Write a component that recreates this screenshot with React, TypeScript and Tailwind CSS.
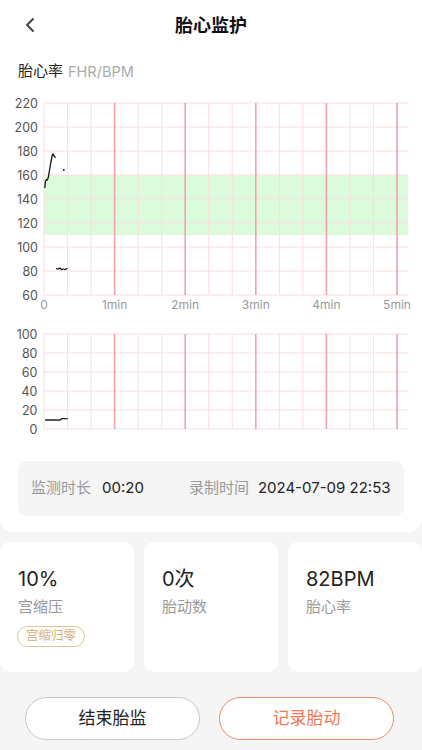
import { ChevronLeft } from 'lucide-react'

const X0 = 44
const X1 = 408
const STEP = 70.6 / 3 // one third of a minute

// vertical grid lines: minor every 20s, major every minute
const vLines = Array.from({ length: 16 }, (_, i) => ({
  x: X0 + i * STEP,
  major: i > 0 && i % 3 === 0,
}))

function Grid({ top, rows, rowH }: { top: number; rows: number; rowH: number }) {
  const bottom = top + rows * rowH
  return (
    <g>
      {Array.from({ length: rows + 1 }, (_, i) => (
        <line key={'h' + i} x1={X0} x2={X1} y1={top + i * rowH} y2={top + i * rowH} stroke="#fcdde2" strokeWidth={1} />
      ))}
      {vLines.filter(v => !v.major).map((v, i) => (
        <line key={'v' + i} x1={v.x} x2={v.x} y1={top} y2={bottom} stroke="#fcdde2" strokeWidth={1} />
      ))}
      {vLines.filter(v => v.major).map((v, i) => (
        <line key={'m' + i} x1={v.x} x2={v.x} y1={top} y2={bottom} stroke="#f4a1ad" strokeWidth={1.6} />
      ))}
    </g>
  )
}

const font = 'Inter, "Noto Sans CJK SC", sans-serif'

function HeartChart() {
  // local coords: plot top 21 (220), bottom 213 (60), 24px per 20 bpm
  const top = 21
  const y = (v: number) => top + (220 - v) * 1.2
  const labels = [220, 200, 180, 160, 140, 120, 100, 80, 60]
  return (
    <svg width={422} height={233} className="block">
      <rect x={X0} y={y(160)} width={X1 - X0} height={y(110) - y(160)} fill="#dcfadc" />
      <Grid top={top} rows={8} rowH={24} />
      {labels.map(l => (
        <text key={l} x={38} y={y(l) + 4.5} textAnchor="end" fontSize={12.5} fill="#555" fontFamily={font}>{l}</text>
      ))}
      {['0', '1min', '2min', '3min', '4min', '5min'].map((t, i) => (
        <text key={t} x={X0 + i * 70.6} y={227} textAnchor="middle" fontSize={12} fill="#999" fontFamily={font}>{t}</text>
      ))}
      <polyline
        points="44.8,106 45.4,99.5 46.5,97.5 47.3,98 48.3,95.5 49.3,89.5 51,79.5 52.3,73 53.3,72 54.3,74.5 55.7,75.5"
        fill="none" stroke="#111" strokeWidth={1.3} strokeLinejoin="round"
      />
      <circle cx={63.8} cy={88} r={0.9} fill="#111" />
      <polyline
        points="56,186.5 58,187 60,186 61.5,187.8 63,186.8 65,187.5 67.5,186.3"
        fill="none" stroke="#111" strokeWidth={1.2}
      />
    </svg>
  )
}

function TocoChart() {
  // local coords: plot top 19 (100), bottom 114 (0), 19px per 20
  const top = 19
  const y = (v: number) => top + (100 - v) * 0.95
  const labels = [100, 80, 60, 40, 20, 0]
  return (
    <svg width={422} height={125} className="block">
      <Grid top={top} rows={5} rowH={19} />
      {labels.map(l => (
        <text key={l} x={37.5} y={y(l) + 4.5} textAnchor="end" fontSize={12.5} fill="#555" fontFamily={font}>{l}</text>
      ))}
      <polyline points="45,105 60,105 61.7,103.7 67.7,103.7" fill="none" stroke="#222" strokeWidth={1.3} />
    </svg>
  )
}

function StatCard({ value, label, badge }: { value: string; label: string; badge?: string }) {
  return (
    <div className="bg-white rounded-[10px] h-[130px] pl-[18px] pt-[24px]">
      <div className="text-[20px] leading-[26px] text-[#222]">{value}</div>
      <div className="text-[15px] leading-[22px] text-[#999] mt-[4px]">{label}</div>
      {badge && (
        <div className="mt-[8px] -ml-[1px] inline-flex items-center h-[21px] px-[8px] rounded-full border border-[#dfc394] text-[#d4b27a] text-[12.5px]">
          {badge}
        </div>
      )}
    </div>
  )
}

export default function App() {
  return (
    <div className="w-[422px] h-[750px] bg-[#f5f5f5] overflow-hidden" style={{ fontFamily: font }}>
      {/* white top section */}
      <div className="bg-white rounded-b-[14px] pb-[16px]">
        {/* header */}
        <div className="relative h-[50px] flex items-center justify-center">
          <ChevronLeft className="absolute left-[18px] top-[13px] text-[#444]" size={24} strokeWidth={2} />
          <h1 className="text-[18px] font-bold text-[#111]">胎心监护</h1>
        </div>

        <div className="mt-[11px] px-[18px] h-[21px] flex items-center gap-[5px]">
          <span className="text-[15px] text-[#222]">胎心率</span>
          <span className="text-[14.5px] text-[#aaa]">FHR/BPM</span>
        </div>

        <HeartChart />
        <TocoChart />

        <div className="mx-[18px] mt-[21px] h-[55px] rounded-[9px] bg-[#f5f5f5] flex items-center pl-[13px] text-[15px] whitespace-nowrap">
          <span className="shrink-0 text-[#999]">监测时长</span>
          <span className="shrink-0 ml-[11px] text-[#222]">00:20</span>
          <span className="shrink-0 ml-[45px] text-[#999]">录制时间</span>
          <span className="shrink-0 ml-[9px] text-[#222]">2024-07-09 22:53</span>
        </div>
      </div>

      {/* stats */}
      <div className="mt-[10px] grid grid-cols-3 gap-[10px]">
        <StatCard value="10%" label="宫缩压" badge="宫缩归零" />
        <StatCard value="0次" label="胎动数" />
        <StatCard value="82BPM" label="胎心率" />
      </div>

      {/* actions */}
      <div className="mt-[25px] flex pl-[25px] gap-[19px]">
        <button className="w-[175px] h-[43px] rounded-full bg-white border border-[#c8c8c8] text-[17px] text-[#222]">结束胎监</button>
        <button className="w-[175px] h-[43px] rounded-full bg-white border border-[#f08866] text-[17px] text-[#ef7a55]">记录胎动</button>
      </div>
    </div>
  )
}
